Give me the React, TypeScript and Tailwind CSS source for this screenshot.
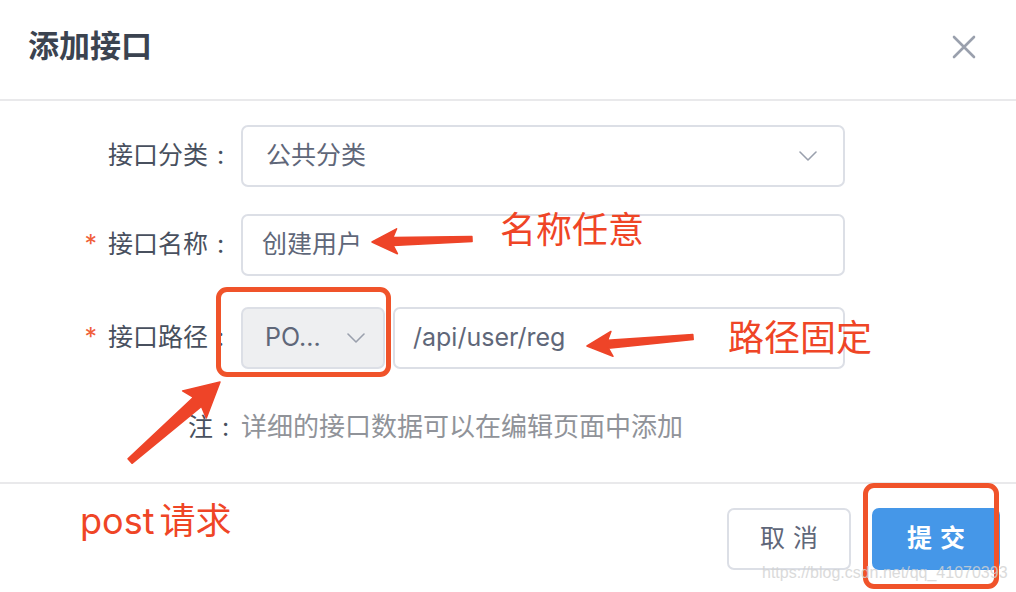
import React from 'react';

const SANS = "font-['Inter','Noto_Sans_CJK_SC',sans-serif]";

// Build a tapered arrow polygon (tail -> tip) for the annotation layer
function arrow(
  tail: [number, number],
  tip: [number, number],
  headLen: number,
  headHalf: number,
  shaftHead: number,
  shaftTail: number,
) {
  const [tx, ty] = tail;
  const [px, py] = tip;
  const len = Math.hypot(px - tx, py - ty);
  const ux = (px - tx) / len;
  const uy = (py - ty) / len;
  const nx = -uy;
  const ny = ux;
  const bx = px - ux * headLen;
  const by = py - uy * headLen;
  // barbs sweep back a little past the head base
  const sx = bx - ux * 4;
  const sy = by - uy * 4;
  const pts = [
    [tx + nx * shaftTail, ty + ny * shaftTail],
    [bx + nx * shaftHead, by + ny * shaftHead],
    [sx + nx * headHalf, sy + ny * headHalf],
    [px, py],
    [sx - nx * headHalf, sy - ny * headHalf],
    [bx - nx * shaftHead, by - ny * shaftHead],
    [tx - nx * shaftTail, ty - ny * shaftTail],
  ];
  return pts.map(([x, y]) => `${x.toFixed(1)},${y.toFixed(1)}`).join(' ');
}

function Chevron() {
  return (
    <svg width="18" height="10" viewBox="0 0 18 10" fill="none">
      <path d="M1 1l8 8 8-8" stroke="#9aa0ad" strokeWidth="1.6" strokeLinecap="round" strokeLinejoin="round" />
    </svg>
  );
}

function Colon() {
  return <span className="inline-block w-[25px] text-center">:</span>;
}

function FieldLabel({ text, required }: { text: string; required?: boolean }) {
  return (
    <div className="flex w-[233px] shrink-0 items-center justify-end text-[25px] text-[#48505e]">
      {required && <span className="mr-[11px] text-[25px] text-[#f0603a]">*</span>}
      <span>{text}</span>
      <Colon />
    </div>
  );
}

export default function App() {
  return (
    <div className={`relative h-[592px] w-[1016px] overflow-hidden bg-white ${SANS}`}>
      {/* Header */}
      <div className="flex h-[101px] items-center justify-between border-b-2 border-[#e9e9eb] pb-[6px] pl-[28px] pr-[40px]">
        <h1 className="text-[31px] font-semibold text-[#3b4350]">添加接口</h1>
        <svg width="24" height="24" viewBox="0 0 24 24" fill="none">
          <path d="M2 2l20 20M22 2L2 22" stroke="#9aa0ad" strokeWidth="2.6" strokeLinecap="round" />
        </svg>
      </div>

      {/* Body */}
      <div className="flex h-[381px] flex-col pt-[24px]">
        <div className="flex items-center gap-[8px]">
          <FieldLabel text="接口分类" />
          <div className="flex h-[62px] w-[604px] items-center justify-between rounded-[7px] border-2 border-[#dcdfe6] pl-[23px] pr-[26px] text-[25px] text-[#5f6779]">
            <span>公共分类</span>
            <Chevron />
          </div>
        </div>

        <div className="mt-[27px] flex items-center gap-[8px]">
          <FieldLabel text="接口名称" required />
          <div className="flex h-[62px] w-[604px] items-center rounded-[7px] border-2 border-[#dcdfe6] pl-[19px] text-[25px] text-[#5f6779]">
            创建用户
          </div>
        </div>

        <div className="mt-[31px] flex items-center gap-[8px]">
          <FieldLabel text="接口路径" required />
          <div className="flex h-[62px] w-[144px] items-center justify-between rounded-[7px] border-2 border-[#dcdfe6] bg-[#eeeff1] pl-[22px] pr-[18px] text-[25px] text-[#5f6779]">
            <span>PO...</span>
            <Chevron />
          </div>
          <div className="flex h-[62px] w-[452px] items-center rounded-[7px] border-2 border-[#dcdfe6] pl-[18px] text-[25px] text-[#5f6779]">
            /api/user/reg
          </div>
        </div>

        <div className="mt-[42px] flex items-center pl-[188px] text-[25px] leading-[32px]">
          <span className="text-[#48505e]">注</span>
          <span className="text-[#48505e]"><Colon /></span>
          <span className="ml-[3px] text-[26px] text-[#909399]">详细的接口数据可以在编辑页面中添加</span>
        </div>
      </div>

      {/* Footer */}
      <div className="flex justify-end gap-[21px] border-t-2 border-[#e9e9eb] pr-[16px] pt-[24px]">
        <button className="flex h-[62px] w-[124px] items-center justify-center rounded-[7px] border-2 border-[#dcdfe6] bg-white text-[25px] tracking-[8px] text-[#5f6779]">
          <span className="pl-[8px]">取消</span>
        </button>
        <button className="flex h-[62px] w-[128px] items-center justify-center rounded-[7px] bg-[#4597e8] text-[25px] font-semibold tracking-[8px] text-white">
          <span className="pl-[8px]">提交</span>
        </button>
      </div>

      {/* Annotation layer */}
      <div className="absolute left-[216px] top-[287px] h-[90px] w-[175px] rounded-[11px] border-[5px] border-[#f0532a]" />
      <div className="absolute left-[863px] top-[483px] h-[106px] w-[136px] rounded-[11px] border-[5px] border-[#f0532a]" />

      <div className="absolute left-[500px] top-[208px] text-[36px] leading-[44px] text-[#ef4526]">名称任意</div>
      <div className="absolute left-[728px] top-[316px] text-[36px] leading-[44px] text-[#ef4526]">路径固定</div>
      <div className="absolute left-[80px] top-[499px] flex text-[36px] leading-[44px] text-[#ef4526]">
        <span>post</span>
        <span className="ml-[5px]">请求</span>
      </div>

      <svg className="pointer-events-none absolute left-0 top-0" width="1016" height="592">
        <g fill="#ee4428" stroke="#ee4428" strokeWidth="1.5" strokeLinejoin="round">
          <polygon points={arrow([472, 239], [372, 242], 21, 12.5, 4, 2.5)} />
          <polygon points={arrow([693, 337], [587, 346], 21, 12.5, 4, 2.5)} />
          <polygon points={arrow([130, 461], [220, 382], 30, 18, 6, 3)} />
        </g>
      </svg>

      <div className="pointer-events-none absolute left-[762px] top-[561px] font-['Liberation_Sans',sans-serif] text-[16px] text-[#d2d2d2] opacity-80">
        https://blog.csdn.net/qq_41070393
      </div>
    </div>
  );
}
